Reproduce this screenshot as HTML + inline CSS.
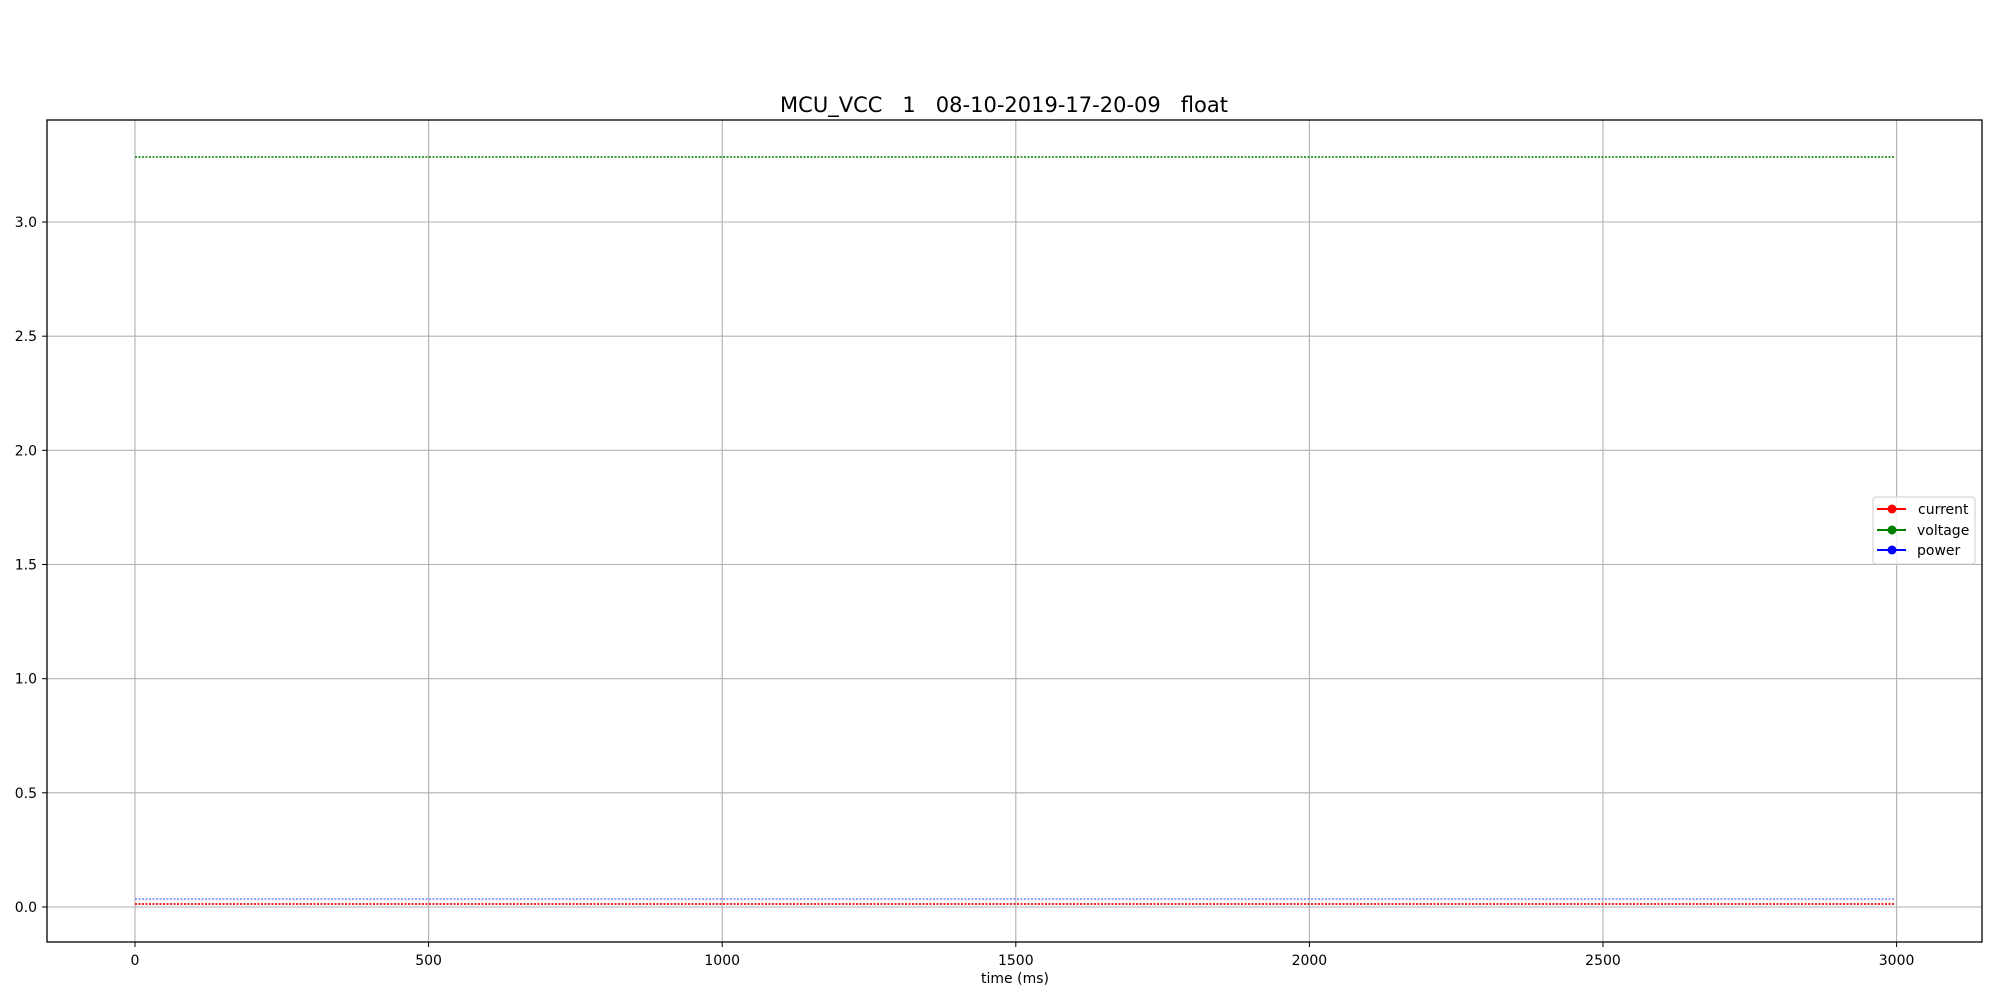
<!DOCTYPE html>
<html><head><style>body{margin:0;background:#fff}svg{display:block}</style></head><body>
<svg width="2000" height="1000" xmlns="http://www.w3.org/2000/svg" font-family="DejaVu Sans, sans-serif">
<rect width="2000" height="1000" fill="#fff"/>
<g stroke="#b0b0b0" stroke-width="1.1">
<line x1="135" y1="120" x2="135" y2="942"/><line x1="428.6" y1="120" x2="428.6" y2="942"/><line x1="722.2" y1="120" x2="722.2" y2="942"/><line x1="1015.8" y1="120" x2="1015.8" y2="942"/><line x1="1309.4" y1="120" x2="1309.4" y2="942"/><line x1="1603" y1="120" x2="1603" y2="942"/><line x1="1896.6" y1="120" x2="1896.6" y2="942"/>
<line x1="47" y1="907" x2="1982" y2="907"/><line x1="47" y1="792.8" x2="1982" y2="792.8"/><line x1="47" y1="678.7" x2="1982" y2="678.7"/><line x1="47" y1="564.5" x2="1982" y2="564.5"/><line x1="47" y1="450.3" x2="1982" y2="450.3"/><line x1="47" y1="336.2" x2="1982" y2="336.2"/><line x1="47" y1="222" x2="1982" y2="222"/>
</g>
<line x1="135" y1="157" x2="1895" y2="157" stroke="#008000" stroke-width="1.5" stroke-dasharray="2 1.5"/>
<line x1="135" y1="899" x2="1895" y2="899" stroke="#8080ff" stroke-width="1.5" stroke-dasharray="2 1.5"/>
<line x1="135" y1="904" x2="1895" y2="904" stroke="#ff0000" stroke-width="1.8" stroke-dasharray="2 1.5"/>
<rect x="47" y="120" width="1935" height="822" fill="none" stroke="#000" stroke-width="1.3"/>
<g stroke="#000" stroke-width="1"><line x1="135" y1="942" x2="135" y2="947"/><line x1="428.6" y1="942" x2="428.6" y2="947"/><line x1="722.2" y1="942" x2="722.2" y2="947"/><line x1="1015.8" y1="942" x2="1015.8" y2="947"/><line x1="1309.4" y1="942" x2="1309.4" y2="947"/><line x1="1603" y1="942" x2="1603" y2="947"/><line x1="1896.6" y1="942" x2="1896.6" y2="947"/>
<line x1="42" y1="907" x2="47" y2="907"/><line x1="42" y1="792.8" x2="47" y2="792.8"/><line x1="42" y1="678.7" x2="47" y2="678.7"/><line x1="42" y1="564.5" x2="47" y2="564.5"/><line x1="42" y1="450.3" x2="47" y2="450.3"/><line x1="42" y1="336.2" x2="47" y2="336.2"/><line x1="42" y1="222" x2="47" y2="222"/></g>
<g font-size="14" text-anchor="middle" fill="#000">
<text x="135" y="965">0</text><text x="428.6" y="965">500</text><text x="722.2" y="965">1000</text><text x="1015.8" y="965">1500</text><text x="1309.4" y="965">2000</text><text x="1603" y="965">2500</text><text x="1896.6" y="965">3000</text>
<text x="1015" y="983">time (ms)</text>
</g>
<g font-size="14" text-anchor="end" fill="#000">
<text x="37" y="912">0.0</text><text x="37" y="797.8">0.5</text><text x="37" y="683.7">1.0</text><text x="37" y="569.5">1.5</text><text x="37" y="455.3">2.0</text><text x="37" y="341.2">2.5</text><text x="37" y="227">3.0</text>
</g>
<text x="1004" y="112" font-size="21" text-anchor="middle" xml:space="preserve">MCU_VCC   1   08-10-2019-17-20-09   float</text>
<rect x="1873" y="497" width="102" height="67" rx="3" fill="#fff" fill-opacity="0.8" stroke="#ccc"/>
<g stroke-width="2"><line x1="1877" y1="509" x2="1906" y2="509" stroke="#f00"/><line x1="1877" y1="530" x2="1906" y2="530" stroke="#008000"/><line x1="1877" y1="550" x2="1906" y2="550" stroke="#00f"/></g>
<circle cx="1892" cy="509" r="4.5" fill="#f00"/><circle cx="1892" cy="530" r="4.5" fill="#008000"/><circle cx="1892" cy="550" r="4.5" fill="#00f"/>
<g font-size="14" fill="#000"><text x="1918" y="514">current</text><text x="1917" y="535">voltage</text><text x="1917" y="555">power</text></g>
</svg>
</body></html>
